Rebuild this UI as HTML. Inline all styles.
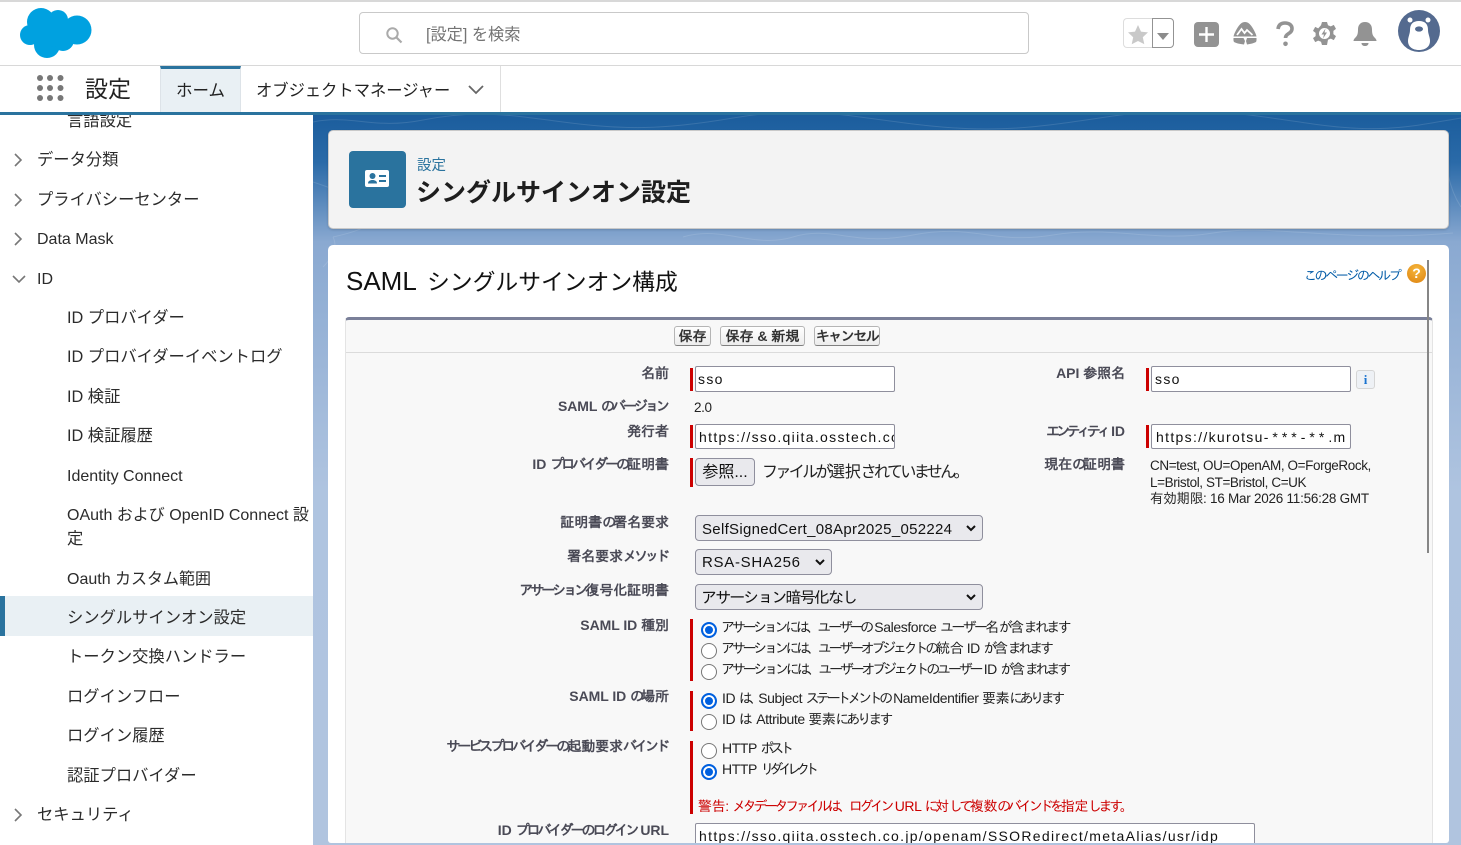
<!DOCTYPE html>
<html lang="ja"><head><meta charset="utf-8"><title>シングルサインオン設定</title>
<style>
html,body{margin:0;padding:0;width:1461px;height:845px;overflow:hidden;background:#fff}
body{font-family:"Liberation Sans","Noto Sans CJK JP",sans-serif;color:#181818;position:relative}
.a{position:absolute;white-space:nowrap}
.nav{font-size:16.3px;line-height:22px;color:#2b2b2b}
.lt{font-size:16px}
.lb{font-family:"Liberation Sans","IPAGothic",sans-serif;font-size:14px;font-weight:bold;color:#4a4a56;text-align:right;right:792px;line-height:16px;letter-spacing:-3px}
.lb2{right:336px}
.t{font-family:"Liberation Sans","IPAGothic",sans-serif;font-size:14px;line-height:18px;color:#222;letter-spacing:-3px}
.p{font-family:"Liberation Sans","IPAGothic",sans-serif;font-size:13.5px;line-height:18px;color:#222;letter-spacing:-.4px}
i{font-style:normal;letter-spacing:-.4px}
.lb i{letter-spacing:-.05px}
.req{position:absolute;background:#c00;width:3px}
.inp{position:absolute;box-sizing:border-box;background:#fff;border:1px solid #8f8f9d;border-radius:2px;height:25px;font-family:"Liberation Sans","IPAGothic",sans-serif;font-size:14px;letter-spacing:1.32px;line-height:24px;padding-left:3px;overflow:hidden;white-space:nowrap;color:#111}
.sel{position:absolute;box-sizing:border-box;background:#e9e9ed;border:1px solid #8f8f9d;border-radius:4px;height:26px;font-family:"Liberation Sans","IPAGothic",sans-serif;font-size:15px;line-height:26px;padding-left:6px;letter-spacing:.7px;color:#111;white-space:nowrap}
.sel svg{position:absolute;right:6px;top:9px}
.rad{position:absolute;box-sizing:border-box;width:16px;height:16px;border-radius:50%;border:1px solid #767676;background:#fff}
.rad.on{border:2px solid #0060df;box-shadow:inset 0 0 0 2px #fff;background:#0060df}
.btn{position:absolute;box-sizing:border-box;top:326px;height:20px;border:1px solid #b5b5b5;border-bottom-color:#7f7f7f;border-radius:3px;background:linear-gradient(#fff,#ececec);font-family:"Liberation Sans","IPAGothic",sans-serif;font-weight:bold;font-size:14px;line-height:18px;text-align:center;color:#333;white-space:nowrap}
.chev{position:absolute}
</style></head><body>

<!-- top bar -->
<div class="a" style="left:0;top:0;width:1461px;height:2px;background:#d8d8d8"></div>
<div class="a" style="left:0;top:65px;width:1461px;height:1px;background:#d8d8d8"></div>
<svg class="a" style="left:19px;top:7px" width="73" height="52" viewBox="0 0 73 52"><g fill="#00a1e0"><circle cx="22" cy="15" r="14"/><circle cx="39" cy="13" r="10"/><circle cx="58" cy="23" r="14.500"/><circle cx="11" cy="28" r="10"/><circle cx="28" cy="38" r="13"/><circle cx="44" cy="33" r="11"/><circle cx="35" cy="25" r="15"/></g></svg>
<div class="a" style="left:359px;top:12px;width:670px;height:42px;box-sizing:border-box;border:1px solid #c9c9c9;border-radius:4px;background:#fff"></div>
<svg class="a" style="left:385px;top:26px" width="18" height="18" viewBox="0 0 18 18"><circle cx="7.500" cy="7.500" r="5.200" fill="none" stroke="#aaa" stroke-width="2"/><path d="M11.500 11.500L16.500 16.500" stroke="#aaa" stroke-width="2.200"/></svg>
<div class="a" style="left:426px;top:25px;font-size:16.200px;line-height:21px;color:#747474">[設定] を検索</div>

<!-- right icons -->
<div class="a" style="left:1123px;top:18px;width:29px;height:30px;box-sizing:border-box;border:1px solid #ddd;border-right:0;border-radius:4px 0 0 4px"></div>
<div class="a" style="left:1152px;top:18px;width:22px;height:30px;box-sizing:border-box;border:1px solid #939393;border-radius:0 4px 4px 0"></div>
<svg class="a" style="left:1127px;top:24px" width="22" height="21" viewBox="0 0 22 21"><path d="M11 1l3 6.600 7 .8-5.200 4.800 1.500 7L11 17l-6.300 3.200 1.500-7L1 8.400l7-.8z" fill="#c9c9c9"/></svg>
<svg class="a" style="left:1157px;top:33px" width="12" height="8"><path d="M0 0h12L6 7z" fill="#8c8c8c"/></svg>
<svg class="a" style="left:1194px;top:22px" width="25" height="25"><rect width="25" height="25" rx="4" fill="#939393"/><path d="M12.500 5v15M5 12.500h15" stroke="#fff" stroke-width="2.400"/></svg>
<svg class="a" style="left:1233px;top:22px" width="24" height="23" viewBox="0 0 24 23"><path d="M12 0c3 0 5 2 7 5s4 7 4.500 9.500H.5C1 12 3 8 5 5s4-5 7-5z" fill="#939393"/><path d="M4 13l4.500-6 3 4 2.500-3 5.500 5" fill="none" stroke="#fff" stroke-width="1.800"/><path d="M.5 16h10l1.500 3-1 3.500C6 22 3 21 1 20c-.6-1-.6-2.500-.5-4zM23.500 16H14l-1 3 1 3.500c4-.5 7-1.500 9-2.500.6-1 .6-2.500.5-4z" fill="#939393"/></svg>
<svg class="a" style="left:1276px;top:21px" width="18" height="26" viewBox="0 0 18 26"><path d="M2 8C2.500 4 5 2 9 2s7 2 7 5.500c0 3-2 4.200-4 5.500-1.800 1.100-2.500 2-2.500 4" fill="none" stroke="#939393" stroke-width="3.600"/><circle cx="9.500" cy="22.800" r="2.300" fill="#939393"/></svg>
<svg class="a" style="left:1313px;top:22px" width="23" height="23" viewBox="0 0 23 23"><path d="M9 0h5l1 3.200 2.800 1.200 3-1.500 2.200 4-2.600 2v3.200l2.600 2-2.200 4-3-1.500-2.800 1.200L14 23H9l-1-3.200-2.800-1.200-3 1.500L0 16.100l2.600-2v-3.200l-2.600-2 2.200-4 3 1.500L8 3.200z" fill="#939393"/><circle cx="11.500" cy="11.500" r="5.500" fill="#fff"/><path d="M12.500 6.500L8.500 12.500h2.500l-1 4 4-6h-2.500z" fill="#939393"/></svg>
<svg class="a" style="left:1353px;top:22px" width="24" height="24" viewBox="0 0 24 24"><path d="M12 0c4.500 0 7 3 7 7.500 0 5 1 6.500 3 8.500 1 1 1.500 2 1.500 3H.5c0-1 .5-2 1.500-3 2-2 3-3.500 3-8.500C5 3 7.500 0 12 0z" fill="#939393"/><path d="M8.500 21h7c0 2-1.500 3-3.500 3s-3.500-1-3.500-3z" fill="#939393"/></svg>
<svg class="a" style="left:1398px;top:10px" width="42" height="42" viewBox="0 0 42 42"><circle cx="21" cy="21" r="21" fill="#546a8f"/><circle cx="12" cy="10" r="2.500" fill="#fff"/><circle cx="30" cy="10" r="2.500" fill="#fff"/><path d="M21 11c6 0 9 3 9 9 0 4 2 7 2 11 0 6-5 9-11 9s-11-3-11-9c0-4 2-7 2-11 0-6 3-9 9-9z" fill="#fff"/><ellipse cx="21" cy="19" rx="4" ry="2.600" fill="#546a8f"/></svg>

<!-- tab bar -->
<div class="a" style="left:0;top:66px;width:1461px;height:46px;background:#fff"></div>
<svg class="a" style="left:37px;top:75px" width="27" height="27"><g fill="#777"><circle cx="3" cy="3" r="3"/><circle cx="13" cy="3" r="3"/><circle cx="23.500" cy="3" r="3"/><circle cx="3" cy="13" r="3"/><circle cx="13" cy="13" r="3"/><circle cx="23.500" cy="13" r="3"/><circle cx="3" cy="23" r="3"/><circle cx="13" cy="23" r="3"/><circle cx="23.500" cy="23" r="3"/></g></svg>
<div class="a" style="left:85px;top:74px;font-size:23px;line-height:30px;color:#222">設定</div>
<div class="a" style="left:160px;top:66px;width:81px;height:46px;box-sizing:border-box;background:#e9f0f4;border-top:3px solid #2a739e;border-left:1px solid #dde3e8;border-right:1px solid #dde3e8"></div>
<div class="a" style="left:176px;top:80px;font-size:16.500px;line-height:22px;color:#222">ホーム</div>
<div class="a" style="left:256px;top:80px;font-size:16.300px;line-height:22px;color:#222">オブジェクトマネージャー</div>
<svg class="a" style="left:468px;top:85px" width="16" height="10"><path d="M1 1l7 7 7-7" fill="none" stroke="#666" stroke-width="1.800"/></svg>
<div class="a" style="left:500px;top:66px;width:1px;height:46px;background:#dfdfdf"></div>

<!-- background -->
<div class="a" style="left:313px;top:112px;width:1148px;height:733px;background:linear-gradient(#1a5c9c 0,#2a6aa8 50px,#8aa9d1 130px,#afc4e0 380px,#b0c4df 733px)"></div>
<svg class="a" style="left:313px;top:112px" width="1148" height="160" fill="none" stroke="#fff" stroke-opacity=".12"><path d="M0 10C40 2 60 18 110 8S190 2 250 10 350 18 420 6 520 2 600 12 720 16 800 4 930 2 1000 12 1100 14 1148 6"/><path d="M0 70C60 90 90 110 20 125M20 125c5 10 0 20-10 30M370 125c40-12 70 12 110 0s60 10 120-2 80 10 140 0 100 8 160-2 120 10 240 0M1136 20c-8 30 2 60 12 75"/></svg>

<!-- sidebar -->
<div class="a" style="left:0;top:115px;width:313px;height:730px;background:#fff;overflow:hidden">
 <div class="a nav" style="left:67px;top:-5px">言語設定</div>
</div>
<div class="a" style="left:0;top:112px;width:1461px;height:3px;background:#2a739e"></div>
<svg class="a chev" style="left:14px;top:153px" width="9" height="14"><path d="M1 1l6 6-6 6" fill="none" stroke="#777" stroke-width="1.600"/></svg>
<div class="a nav" style="left:37px;top:149px">データ分類</div>
<svg class="a chev" style="left:14px;top:193px" width="9" height="14"><path d="M1 1l6 6-6 6" fill="none" stroke="#777" stroke-width="1.600"/></svg>
<div class="a nav" style="left:37px;top:189px">プライバシーセンター</div>
<svg class="a chev" style="left:14px;top:232px" width="9" height="14"><path d="M1 1l6 6-6 6" fill="none" stroke="#777" stroke-width="1.600"/></svg>
<div class="a nav lt" style="left:37px;top:229px">Data Mask</div>
<svg class="a chev" style="left:12px;top:275px" width="14" height="9"><path d="M1 1l6 6 6-6" fill="none" stroke="#777" stroke-width="1.600"/></svg>
<div class="a nav lt" style="left:37px;top:269px">ID</div>
<div class="a nav" style="left:67px;top:307px">ID プロバイダー</div>
<div class="a nav" style="left:67px;top:346px">ID プロバイダーイベントログ</div>
<div class="a nav" style="left:67px;top:386px">ID 検証</div>
<div class="a nav" style="left:67px;top:425px">ID 検証履歴</div>
<div class="a nav lt" style="left:67px;top:466px">Identity Connect</div>
<div class="a nav lt" style="left:67px;top:505px;width:246px;overflow:hidden">OAuth および OpenID Connect 設</div>
<div class="a nav" style="left:67px;top:528px">定</div>
<div class="a nav lt" style="left:67px;top:569px">Oauth カスタム範囲</div>
<div class="a" style="left:0;top:596px;width:313px;height:40px;background:#e9f0f4"></div>
<div class="a" style="left:0;top:596px;width:5px;height:40px;background:#2a739e"></div>
<div class="a nav" style="left:67px;top:607px">シングルサインオン設定</div>
<div class="a nav" style="left:67px;top:646px">トークン交換ハンドラー</div>
<div class="a nav" style="left:67px;top:686px">ログインフロー</div>
<div class="a nav" style="left:67px;top:725px">ログイン履歴</div>
<div class="a nav" style="left:67px;top:765px">認証プロバイダー</div>
<svg class="a chev" style="left:14px;top:808px" width="9" height="14"><path d="M1 1l6 6-6 6" fill="none" stroke="#777" stroke-width="1.600"/></svg>
<div class="a nav" style="left:37px;top:804px">セキュリティ</div>

<!-- header card -->
<div class="a" style="left:328px;top:130px;width:1121px;height:99px;box-sizing:border-box;background:#f3f3f3;border:1px solid #c9c9c9;border-radius:5px;box-shadow:0 1px 2px rgba(0,0,0,.15)"></div>
<div class="a" style="left:349px;top:151px;width:57px;height:57px;background:#2a739e;border-radius:4px"></div>
<svg class="a" style="left:365px;top:170px" width="24" height="17" viewBox="0 0 24 17"><rect width="24" height="17" rx="2" fill="#fff"/><circle cx="7.500" cy="6" r="3" fill="#2a739e"/><path d="M3 13.500c0-2.500 2-3.500 4.500-3.500s4.500 1 4.500 3.500z" fill="#2a739e"/><rect x="14" y="5" width="7" height="2" fill="#2a739e"/><rect x="14" y="10" width="7" height="2" fill="#2a739e"/></svg>
<div class="a" style="left:417px;top:157px;font-size:14.500px;line-height:19px;color:#2a739e">設定</div>
<div class="a" style="left:416px;top:176px;font-size:25px;line-height:34px;font-weight:bold;color:#1e1e1e">シングルサインオン設定</div>

<!-- main card -->
<div class="a" style="left:328px;top:245px;width:1121px;height:598px;background:#fff;border-radius:5px 5px 3px 3px"></div>
<div class="a" style="left:346px;top:263px;font-size:26px;line-height:36px;color:#111">SAML</div>
<div class="a" style="left:427px;top:264px;font-size:22.800px;line-height:36px;color:#111">シングルサインオン構成</div>
<div class="a" style="left:1304px;top:267px;font-family:'Liberation Sans','IPAGothic',sans-serif;font-size:13px;line-height:18px;color:#015ba7;letter-spacing:-2.400px">このページのヘルプ</div>
<div class="a" style="left:1407px;top:264px;width:19px;height:19px;border-radius:50%;background:radial-gradient(circle at 50% 30%,#f6b73c,#dd8210);color:#fff;font-size:14px;font-weight:bold;line-height:19px;text-align:center">?</div>

<!-- form panel -->
<div class="a" style="left:345px;top:317px;width:1088px;height:526px;box-sizing:border-box;background:#f8f8f8;border-left:1px solid #e4e4e4;border-right:1px solid #e4e4e4;border-top:3px solid #7a8099;border-radius:4px 4px 0 0"></div>
<div class="a" style="left:346px;top:352px;width:1086px;height:1px;background:#dbdbdb"></div>
<div class="a" style="left:1427px;top:260px;width:2px;height:293px;background:#868686"></div>

<div class="btn" style="left:674px;width:37px">保存</div>
<div class="btn" style="left:720px;width:85px">保存 &amp; 新規</div>
<div class="btn" style="left:814px;width:66px;letter-spacing:-1.500px">キャンセル</div>

<!-- left labels -->
<div class="a lb" style="top:365px"><i>名前</i></div>
<div class="a lb" style="top:398px;right:794px"><i>SAML </i>のバージョン</div>
<div class="a lb" style="top:423px"><i>発行者</i></div>
<div class="a lb" style="top:456px"><i>ID </i>プロバイダーの<i>証明書</i></div>
<div class="a lb" style="top:514px"><i>証明書</i>の<i>署名要求</i></div>
<div class="a lb" style="top:548px;right:794px"><i>署名要求</i>メソッド</div>
<div class="a lb" style="top:582px">アサーション<i>復号化証明書</i></div>
<div class="a lb" style="top:617px"><i>SAML ID 種別</i></div>
<div class="a lb" style="top:688px"><i>SAML ID </i>の<i>場所</i></div>
<div class="a lb" style="top:738px;right:794px">サービスプロバイダーの<i>起動要求</i>バインド</div>
<div class="a lb" style="top:822px"><i>ID </i>プロバイダーのログイン<i> URL</i></div>

<!-- right labels -->
<div class="a lb lb2" style="top:365px"><i>API 参照名</i></div>
<div class="a lb lb2" style="top:423px;letter-spacing:-3.800px">エンティティ<i> ID</i></div>
<div class="a lb lb2" style="top:456px"><i>現在</i>の<i>証明書</i></div>

<!-- red bars -->
<div class="req" style="left:690px;top:368px;height:23px"></div>
<div class="req" style="left:690px;top:425px;height:23px"></div>
<div class="req" style="left:690px;top:458px;height:29px"></div>
<div class="req" style="left:1146px;top:368px;height:23px"></div>
<div class="req" style="left:1146px;top:425px;height:23px"></div>
<div class="req" style="left:690px;top:619px;height:62px"></div>
<div class="req" style="left:690px;top:691px;height:40px"></div>
<div class="req" style="left:690px;top:741px;height:73px"></div>

<!-- inputs -->
<div class="inp" style="left:695px;top:366px;width:200px;height:26px;line-height:25px;padding-left:2px">sso</div>
<div class="inp" style="left:1151px;top:366px;width:200px;height:26px;line-height:25px">sso</div>
<div class="a" style="left:1356px;top:370px;width:19px;height:19px;box-sizing:border-box;border:1px solid #d5d5d5;border-radius:3px;background:#eef1f5;color:#1a73d0;font:bold 13px/17px 'Liberation Serif',serif;text-align:center">i</div>
<div class="p a" style="left:694px;top:399px">2.0</div>
<div class="inp" style="left:695px;top:424px;width:200px">https://sso.qiita.osstech.co</div>
<div class="inp" style="left:1151px;top:424px;width:200px;padding-left:4px">https://kurotsu<span style="letter-spacing:4px">-***-**</span>.m</div>
<div class="a" style="left:695px;top:458px;width:60px;height:28px;box-sizing:border-box;border:1px solid #8f8f9d;border-radius:4px;background:#e9e9ed;font-size:16px;line-height:27px;text-align:center;color:#111">参照...</div>
<div class="a" style="left:762px;top:462px;font-size:16px;line-height:22px;color:#222;letter-spacing:-2.600px">ファイルが<span style="letter-spacing:-.2px">選択</span>されていません。</div>

<div class="p a" style="left:1150px;top:457px">CN=test, OU=OpenAM, O=ForgeRock,</div>
<div class="p a" style="left:1150px;top:474px">L=Bristol, ST=Bristol, C=UK</div>
<div class="p a" style="left:1150px;top:490px;letter-spacing:-.25px">有効期限: 16 Mar 2026 11:56:28 GMT</div>

<!-- selects -->
<div class="sel" style="left:695px;top:515px;width:288px;letter-spacing:.3px;line-height:28px">SelfSignedCert_08Apr2025_052224<svg width="10" height="7"><path d="M1 1l4 4 4-4" fill="none" stroke="#111" stroke-width="2"/></svg></div>
<div class="sel" style="left:695px;top:549px;width:137px">RSA-SHA256<svg width="10" height="7"><path d="M1 1l4 4 4-4" fill="none" stroke="#111" stroke-width="2"/></svg></div>
<div class="sel" style="left:695px;top:584px;width:288px;font-size:16px;padding-left:5px;letter-spacing:-1.900px;line-height:28px">アサーション暗号化なし<svg width="10" height="7"><path d="M1 1l4 4 4-4" fill="none" stroke="#111" stroke-width="2"/></svg></div>

<!-- radios -->
<div class="rad on" style="left:701px;top:622px"></div>
<div class="t a" style="left:721px;top:618px;letter-spacing:-3.300px">アサーションには、ユーザーの<i> Salesforce </i><span style="letter-spacing:-2.700px">ユーザー<i>名</i>が<i>含</i>まれます</span></div>
<div class="rad" style="left:701px;top:643px"></div>
<div class="t a" style="left:721px;top:639px;letter-spacing:-3.250px">アサーションには、ユーザーオブジェクトの<i>統合 ID </i>が<i>含</i>まれます</div>
<div class="rad" style="left:701px;top:664px"></div>
<div class="t a" style="left:721px;top:660px;letter-spacing:-3.200px">アサーションには、ユーザーオブジェクトのユーザー<i> ID </i>が<i>含</i>まれます</div>
<div class="rad on" style="left:701px;top:693px"></div>
<div class="t a" style="left:722px;top:689px;letter-spacing:-3.500px"><i>ID </i>は、<i style="margin-left:-5px"> Subject </i>ステートメントの<i> NameIdentifier 要素</i>にあります</div>
<div class="rad" style="left:701px;top:714px"></div>
<div class="t a" style="left:722px;top:710px"><i>ID </i>は<i style="margin-left:3px"> Attribute 要素</i>にあります</div>
<div class="rad" style="left:701px;top:743px"></div>
<div class="t a" style="left:722px;top:739px;letter-spacing:-4px"><i>HTTP </i>ポスト</div>
<div class="rad on" style="left:701px;top:764px"></div>
<div class="t a" style="left:722px;top:760px;letter-spacing:-5px"><i>HTTP </i>リダイレクト</div>
<div class="t a" style="left:698px;top:797px;color:#c00;letter-spacing:-3.400px"><i>警告: </i>メタデータファイルは、ログイン<i> URL </i>に<i>対</i>して<i>複数</i>のバインドを<i>指定</i>します。</div>

<div class="inp" style="left:695px;top:823px;width:560px;height:20px;border-bottom:0;border-radius:2px 2px 0 0;line-height:24px">https://sso.qiita.osstech.co.jp/openam/SSORedirect/metaAlias/usr/idp</div>

<div class="a" style="left:0;top:843px;width:313px;height:2px;background:#fff"></div>
<div class="a" style="left:313px;top:843px;width:1148px;height:2px;background:#b0c4df"></div>
</body></html>
